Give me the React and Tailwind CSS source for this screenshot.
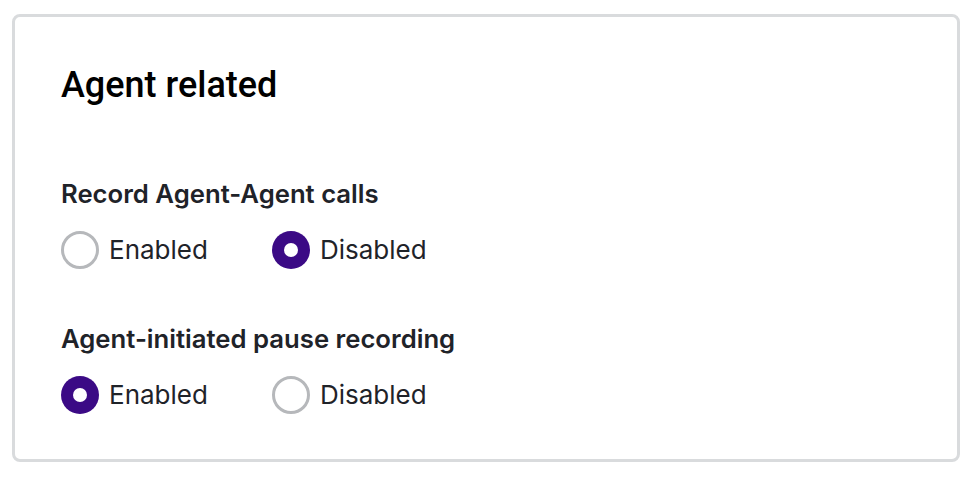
import React, { useState } from "react";

const RadioOption = ({ label, checked, onSelect }) => (
  <label
    className="flex items-center gap-[10px] cursor-pointer"
    onClick={onSelect}
  >
    {checked ? (
      <span className="w-[38px] h-[38px] rounded-full bg-[#3b0a85] flex items-center justify-center">
        <span className="w-[14px] h-[14px] rounded-full bg-white" />
      </span>
    ) : (
      <span className="w-[38px] h-[38px] rounded-full border-[3px] border-[#b6b8bb] bg-white" />
    )}
    <span className="text-[26px] leading-[32px] text-[#1f2329]">{label}</span>
  </label>
);

const RadioSetting = ({ title, value, onChange }) => (
  <div className="flex flex-col gap-[21px]">
    <div className="text-[25.7px] leading-[32px] font-semibold text-[#1f2329]">
      {title}
    </div>
    <div className="flex items-center gap-[64px]">
      <RadioOption
        label="Enabled"
        checked={value === "enabled"}
        onSelect={() => onChange("enabled")}
      />
      <RadioOption
        label="Disabled"
        checked={value === "disabled"}
        onSelect={() => onChange("disabled")}
      />
    </div>
  </div>
);

export default function App() {
  const [agentCalls, setAgentCalls] = useState("disabled");
  const [pauseRecording, setPauseRecording] = useState("enabled");

  return (
    <div
      className="w-[980px] h-[480px] bg-white pt-[14px] pl-[12px]"
      style={{ fontFamily: "Inter, Roboto, 'Liberation Sans', sans-serif" }}
    >
      <div className="w-[948px] h-[448px] border-[3px] border-[#d9dbdd] rounded-[8px] pl-[46px] pt-[48px]">
        <h2
          className="text-[36px] leading-[40px] font-medium text-black"
          style={{ fontFamily: "Roboto, 'Liberation Sans', sans-serif" }}
        >
          Agent related
        </h2>

        <div className="mt-[73px] flex flex-col gap-[54px]">
          <RadioSetting
            title="Record Agent-Agent calls"
            value={agentCalls}
            onChange={setAgentCalls}
          />
          <RadioSetting
            title="Agent-initiated pause recording"
            value={pauseRecording}
            onChange={setPauseRecording}
          />
        </div>
      </div>
    </div>
  );
}
